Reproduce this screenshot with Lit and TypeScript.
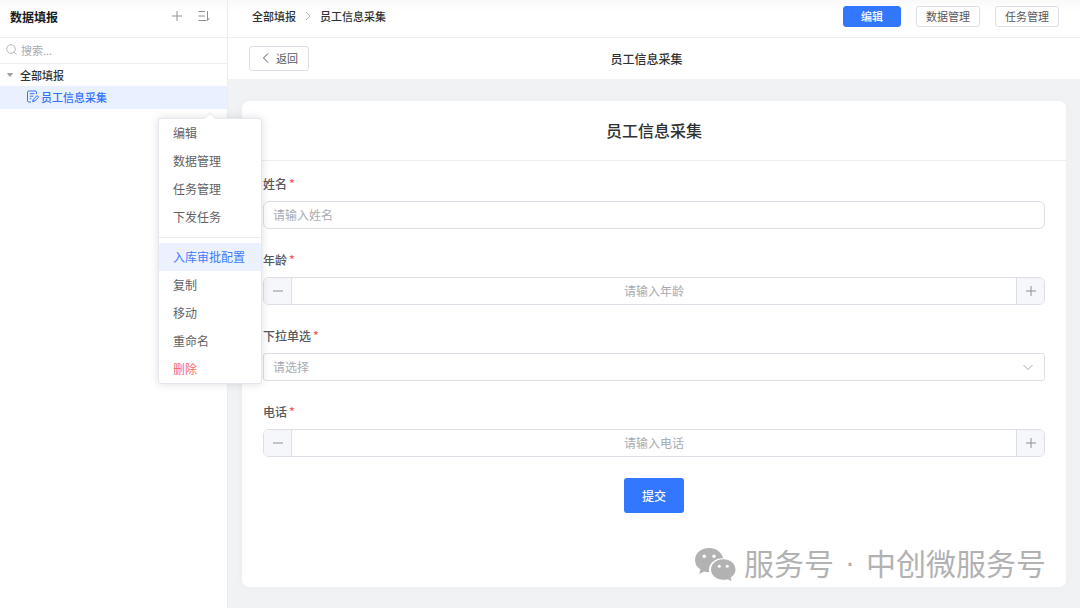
import { LitElement, html, css, svg, nothing } from "lit";
import { customElement, property } from "lit/decorators.js";
import { classMap } from "lit/directives/class-map.js";

const plus = html`<svg class="icon" viewBox="0 0 12 12" width="12" height="12" aria-hidden="true">${svg`<path d="M6 1v10M1 6h10" />`}</svg>`;
const minus = html`<svg class="icon" viewBox="0 0 12 12" width="12" height="12" aria-hidden="true">${svg`<path d="M1 6h10" />`}</svg>`;

const shared = css`
  *,
  *::before,
  *::after {
    box-sizing: border-box;
  }
  button,
  input,
  select {
    font: inherit;
    color: inherit;
    margin: 0;
    padding: 0;
    border: 0;
    background: none;
    outline: none;
  }
  button {
    cursor: pointer;
  }
  .icon {
    display: block;
    fill: none;
    stroke: currentColor;
    stroke-width: 1;
    flex: none;
  }
`;

@customElement("side-bar")
class SideBar extends LitElement {
  static styles = [
    shared,
    css`
      :host {
        display: block;
        background: linear-gradient(#f9f9f9, #fff 12px);
        border-right: 1px solid #ebedf0;
      }
      .head {
        display: flex;
        align-items: center;
        gap: 15px;
        height: 38px;
        padding: 0 17px 5px 10px;
        border-bottom: 1px solid #ebeef2;
      }
      .title {
        flex: 1;
        margin: 0;
        font-size: 12px;
        font-weight: 700;
        color: #1b1d20;
      }
      .tool {
        color: #8d9095;
      }
      .search {
        display: flex;
        align-items: center;
        gap: 4px;
        height: 26px;
        padding: 0 6px 2px;
        border-bottom: 1px solid #ebeef2;
        color: #b6b9be;
      }
      .search input {
        flex: 1;
        min-width: 0;
        font-size: 11px;
      }
      .search input::placeholder {
        color: #a8abb2;
        opacity: 1;
      }
      .node {
        display: flex;
        align-items: center;
        width: 100%;
        height: 22px;
        padding: 0 0 1px 6px;
        gap: 6px;
        font-size: 11px;
        font-weight: 500;
        color: #303338;
      }
      .leaf {
        height: 23px;
        padding: 0 0 2px 26px;
        gap: 2px;
        background: #e9f0ff;
        color: #3370ff;
      }
      .caret {
        fill: #9a9da3;
        stroke: none;
      }
    `,
  ];

  render() {
    return html`
      <header class="head">
        <h1 class="title">数据填报</h1>
        <button class="tool" aria-label="新建">${plus}</button>
        <button class="tool" aria-label="排序">
          <svg class="icon" viewBox="0 0 12 12" width="12" height="12">
            <path d="M0.500 1.500h6.500M0.500 6h6.500M0.500 10.500h8M9.500 1v9.500l2-2.500" />
          </svg>
        </button>
      </header>
      <label class="search">
        <svg class="icon" viewBox="0 0 11 11" width="11" height="11" aria-hidden="true">
          <circle cx="5" cy="5" r="4.300" />
          <path d="M8 8l2.600 2.600" />
        </svg>
        <input type="search" placeholder="搜索..." aria-label="搜索" />
      </label>
      <nav>
        <button class="node" aria-expanded="true">
          <svg class="icon caret" viewBox="0 0 8 8" width="8" height="8"><path d="M0.800 2h6.400l-3.200 4z" /></svg>
          全部填报
        </button>
        <button class="node leaf" aria-current="true">
          <svg class="icon" viewBox="0 0 13 13" width="13" height="13">
            <path d="M10.500 4V2.200Q10.500 1 9.300 1H2.700Q1.500 1 1.500 2.200v8.600Q1.500 12 2.700 12H5M3.700 3.700h4.800M3.700 6.200h3.600M3.700 8.700h1.600" />
            <path d="M6.700 11.800l0.500-2.200 3.900-4 1.500 1.500-3.900 4zM7.200 9.600l1.500 1.500" />
          </svg>
          员工信息采集
        </button>
      </nav>
    `;
  }
}

@customElement("context-menu")
class ContextMenu extends LitElement {
  static styles = [
    shared,
    css`
      :host {
        display: block;
        width: 104px;
        background: #fff;
        border: 1px solid #e4e7ed;
        border-radius: 3px;
        box-shadow: 0 0 10px rgba(0, 0, 0, 0.13);
      }
      .arrow {
        position: absolute;
        top: -5px;
        left: 47px;
        width: 8px;
        height: 8px;
        background: #fff;
        border: 1px solid #e8eaee;
        border-right: 0;
        border-bottom: 0;
        transform: rotate(45deg);
      }
      .list {
        position: relative;
        margin: 0;
        padding: 0;
        list-style: none;
      }
      .item {
        display: block;
        width: 100%;
        height: 28px;
        padding: 0 0 2px 14px;
        text-align: left;
        font-size: 12px;
        color: #606266;
      }
      .active {
        background: #ebf1ff;
        color: #3f7bff;
      }
      .danger {
        color: #f56c6c;
      }
      .divider {
        height: 1px;
        margin: 6px 0 5px;
        background: #e9ebef;
      }
    `,
  ];

  render() {
    const items = ["编辑", "数据管理", "任务管理", "下发任务", "-", "入库审批配置", "复制", "移动", "重命名", "删除"];
    return html`<div class="arrow"></div>
      <ul class="list" role="menu">
        ${items.map((t) =>
          t === "-"
            ? html`<li class="divider" role="separator"></li>`
            : html`<li role="none">
                <button
                  role="menuitem"
                  class=${classMap({ item: true, active: t === "入库审批配置", danger: t === "删除" })}
                >${t}</button>
              </li>`
        )}
      </ul>`;
  }
}

@customElement("form-field")
class FormField extends LitElement {
  @property() label = "";
  @property() kind = "text";
  @property() hint = "";

  static styles = [
    shared,
    css`
      :host {
        display: block;
        font-size: 12px;
        color: #606266;
      }
      .label {
        display: flex;
        gap: 2px;
        height: 20px;
        line-height: 20px;
        margin-bottom: 7px;
        font-weight: 500;
        color: #55585d;
      }
      .star {
        color: #f55656;
        line-height: 18px;
      }
      .box {
        display: flex;
        align-items: center;
        height: 28px;
        border: 1px solid #dcdfe6;
        border-radius: 6px;
        overflow: hidden;
        background: #fff;
      }
      .select {
        border-radius: 3px;
        position: relative;
      }
      .control {
        flex: 1;
        min-width: 0;
        height: 100%;
        padding: 0 9px 2px;
        appearance: none;
      }
      .control::placeholder {
        color: #a8abb2;
        opacity: 1;
      }
      select.control {
        color: #a8abb2;
      }
      .center {
        text-align: center;
      }
      .step {
        display: grid;
        place-items: center;
        width: 28px;
        height: 100%;
        background: #f5f7fa;
        color: #8b8e94;
      }
      .dec {
        border-right: 1px solid #dcdfe6;
      }
      .inc {
        border-left: 1px solid #dcdfe6;
      }
      .chevron {
        position: absolute;
        right: 10px;
        color: #a8abb2;
        pointer-events: none;
      }
    `,
  ];

  render() {
    const numeric = this.kind === "number";
    return html`
      <label class="label" for="control">${this.label}<span class="star">*</span></label>
      ${this.kind === "select"
        ? html`<div class="box select">
            <select class="control" id="control" required>
              <option value="">${this.hint}</option>
            </select>
            <svg class="icon chevron" viewBox="0 0 12 12" width="12" height="12" aria-hidden="true">
              <path d="M1.500 4l4.500 4.500 4.500-4.500" />
            </svg>
          </div>`
        : html`<div class="box">
            ${numeric ? html`<button class="step dec" type="button" aria-label="减少">${minus}</button>` : nothing}
            <input
              class=${classMap({ control: true, center: numeric })}
              id="control"
              type="text"
              inputmode=${numeric ? "numeric" : "text"}
              placeholder=${this.hint}
              required
            />
            ${numeric ? html`<button class="step inc" type="button" aria-label="增加">${plus}</button>` : nothing}
          </div>`}
    `;
  }
}

@customElement("app-root")
class AppRoot extends LitElement {
  static styles = [
    shared,
    css`
      :host {
        display: grid;
        grid-template-columns: 228px minmax(0, 1fr);
        position: relative;
        min-height: 100vh;
        background: #f0f2f4;
        font-family: "Noto Sans CJK SC", "Noto Sans", sans-serif;
        font-size: 12px;
        color: #303133;
      }
      .main {
        display: flex;
        flex-direction: column;
      }
      .top {
        display: flex;
        align-items: center;
        gap: 15px;
        height: 38px;
        padding: 0 21px 5px 24px;
        background: linear-gradient(#f9f9f9, #fff 12px);
        border-bottom: 1px solid #ebeef2;
        font-size: 11px;
      }
      .crumbs {
        display: flex;
        flex: 1;
        align-items: center;
        gap: 7px;
        font-weight: 500;
      }
      .crumbs a {
        color: inherit;
        text-decoration: none;
      }
      .crumbs .icon {
        color: #b4b7bd;
      }
      .btn {
        height: 21px;
        padding: 0 9px;
        border: 1px solid #dcdfe6;
        border-radius: 3px;
        background: #fff;
        font-size: 11px;
        color: #55585d;
      }
      .primary {
        border-color: #3377ff;
        background: #3377ff;
        color: #fff;
        font-weight: 500;
        padding: 0 17px;
      }
      .bar {
        display: grid;
        grid-template-columns: 1fr auto 1fr;
        align-items: center;
        height: 41px;
        padding: 0 36px 1px 21px;
        background: #fff;
      }
      .back {
        display: flex;
        align-items: center;
        justify-self: start;
        gap: 4px;
        height: 25px;
        padding: 0 10px;
      }
      .heading {
        margin: 0;
        font-size: 12px;
        font-weight: 500;
      }
      .card {
        flex: 1;
        margin: 22px 14px 21px;
        border-radius: 7px;
        background: #fff;
        box-shadow: 0 0 8px rgba(0, 0, 0, 0.03);
      }
      .caption {
        height: 60px;
        margin: 0;
        border-bottom: 1px solid #ebeef2;
        line-height: 59px;
        text-align: center;
        font-size: 16px;
        font-weight: 500;
      }
      .form {
        display: flex;
        flex-direction: column;
        gap: 21px;
        padding: 13px 21px;
      }
      .submit {
        align-self: center;
        height: 35px;
        padding: 0 18px 1px;
        border-radius: 3px;
        background: #3377ff;
        color: #fff;
        font-weight: 500;
      }
      .menu {
        position: absolute;
        top: 118px;
        left: 158px;
      }
      .mark {
        position: absolute;
        right: 34px;
        bottom: 20px;
        display: flex;
        align-items: center;
        gap: 8px;
        font-size: 30px;
        line-height: 44px;
        color: #b2b2b2;
      }
      .words {
        display: flex;
        gap: 11px;
        padding-bottom: 4px;
      }
      .dot {
        font-family: "Liberation Sans", sans-serif;
      }
    `,
  ];

  render() {
    return html`
      <side-bar></side-bar>
      <main class="main">
        <header class="top">
          <nav class="crumbs">
            <a href="#all">全部填报</a>
            <svg class="icon" viewBox="0 0 10 10" width="10" height="10" aria-hidden="true">
              <path d="M3 1l4 4-4 4" />
            </svg>
            <span>员工信息采集</span>
          </nav>
          <button class="btn primary">编辑</button>
          <button class="btn">数据管理</button>
          <button class="btn">任务管理</button>
        </header>
        <div class="bar">
          <button class="btn back">
            <svg class="icon" viewBox="0 0 12 12" width="12" height="12" aria-hidden="true">
              <path d="M8 1.500l-4.500 4.500 4.500 4.500" />
            </svg>
            返回
          </button>
          <h2 class="heading">员工信息采集</h2>
        </div>
        <section class="card">
          <h3 class="caption">员工信息采集</h3>
          <form class="form" @submit=${(e: Event) => e.preventDefault()}>
            <form-field label="姓名" hint="请输入姓名"></form-field>
            <form-field label="年龄" kind="number" hint="请输入年龄"></form-field>
            <form-field label="下拉单选" kind="select" hint="请选择"></form-field>
            <form-field label="电话" kind="number" hint="请输入电话"></form-field>
            <button class="submit" type="submit">提交</button>
          </form>
        </section>
      </main>
      <context-menu class="menu"></context-menu>
      <div class="mark">
        <svg viewBox="0 0 42 34" width="42" height="34" aria-hidden="true">
          <path
            fill="#b2b2b2"
            d="M15 1C7 1 1 6.200 1 13c0 4 2 7.200 5.500 9.500L5.200 27l5-2.500c1.500.5 3.200.7 5 .7C13.600 17.500 20 11 29.200 11.200 27.500 5 22 1 15 1z"
          />
          <path
            fill="#b2b2b2"
            d="M29.300 12.200c-7 0-12.300 4.600-12.300 10.300S22.300 32.800 29.300 32.800c1.500 0 3-.2 4.300-.6l4 2-1-3.600c3-1.900 4.900-4.700 4.900-8.100 0-5.700-5.200-10.300-12.200-10.300z"
          />
          <g fill="#fff">
            <circle cx="10.300" cy="9.200" r="1.800" />
            <circle cx="20" cy="9.200" r="1.800" />
            <circle cx="25.300" cy="19.300" r="1.500" />
            <circle cx="33.300" cy="19.300" r="1.500" />
          </g>
        </svg>
        <span class="words"><span>服务号</span><span class="dot">·</span><span>中创微服务号</span></span>
      </div>
    `;
  }
}
